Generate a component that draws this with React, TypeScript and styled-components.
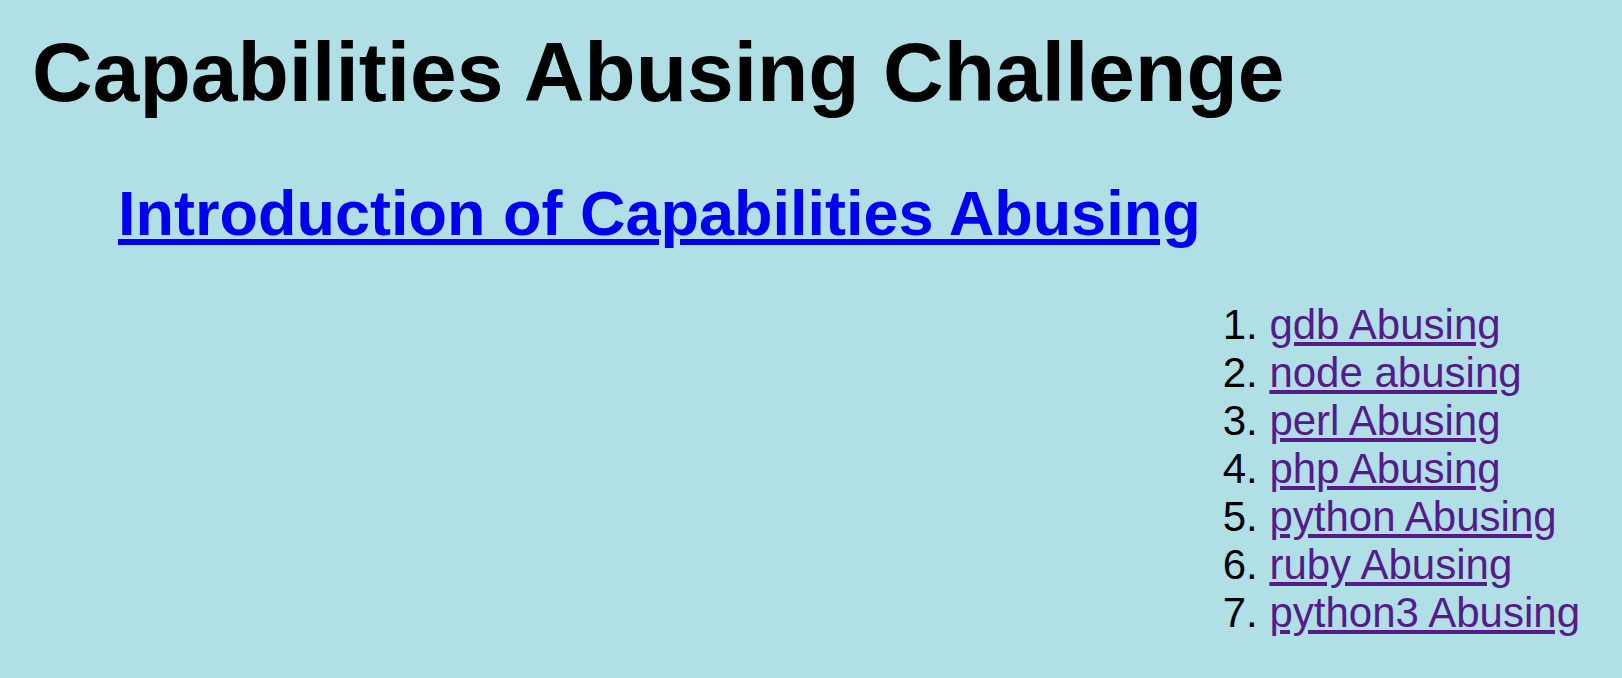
import React from "react";
import styled, { createGlobalStyle } from "styled-components";

const GlobalStyle = createGlobalStyle`
  html, body {
    margin: 0;
    padding: 0;
    background: #b0e0e6;
  }
  body {
    font-family: "Liberation Sans", Arial, sans-serif;
    color: #000;
  }
`;

const Page = styled.main`
  min-height: 678px;
  box-sizing: border-box;
  padding: 24px 42px 0 32px;
  background: #b0e0e6;
`;

const Title = styled.h1`
  margin: 0 0 56px 0;
  font-size: 84px;
  font-weight: bold;
  line-height: normal;
`;

const Subtitle = styled.h2`
  margin: 0 0 52px 86px;
  font-size: 63px;
  font-weight: bold;
  line-height: normal;
`;

const Link = styled.a<{ $visited?: boolean }>`
  color: ${(p) => (p.$visited ? "#551a8b" : "#0000ee")};
  text-decoration: underline;
  cursor: pointer;
`;

const ListRow = styled.div`
  display: flex;
  justify-content: flex-end;
`;

const List = styled.ol`
  margin: 0;
  padding: 0 0 0 105px;
  font-size: 42px;
  line-height: 48px;
`;

const Item = styled.li``;

const items = [
  "gdb Abusing",
  "node abusing",
  "perl Abusing",
  "php Abusing",
  "python Abusing",
  "ruby Abusing",
  "python3 Abusing",
];

export default function App() {
  return (
    <>
      <GlobalStyle />
      <Page>
        <Title>Capabilities Abusing Challenge</Title>
        <Subtitle>
          <Link href="#intro">Introduction of Capabilities Abusing</Link>
        </Subtitle>
        <ListRow>
          <List>
            {items.map((t) => (
              <Item key={t}>
                <Link $visited href={`#${t.replace(/\s+/g, "-")}`}>
                  {t}
                </Link>
              </Item>
            ))}
          </List>
        </ListRow>
      </Page>
    </>
  );
}
